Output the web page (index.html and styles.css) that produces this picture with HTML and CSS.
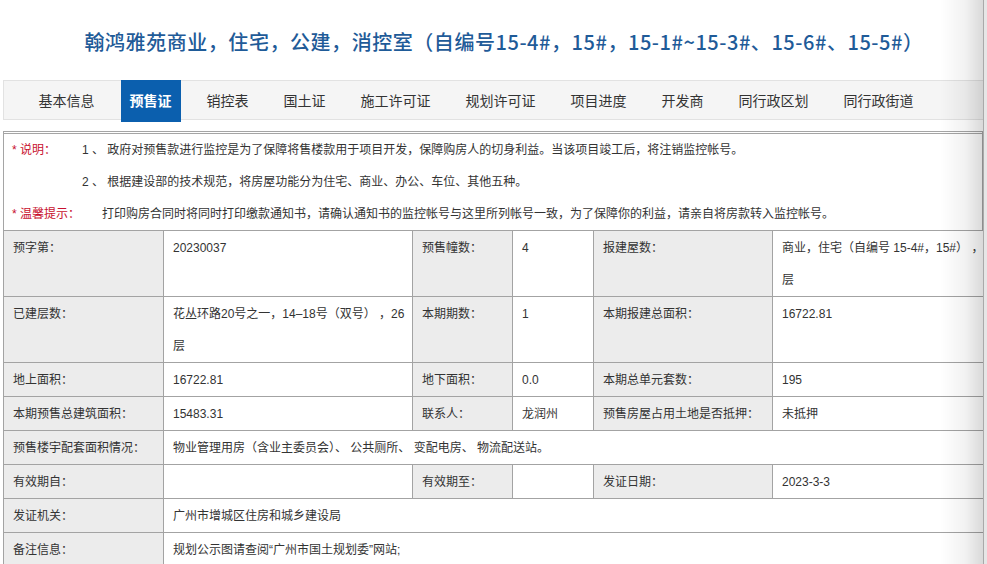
FILE: index.html
```html
<!DOCTYPE html>
<html lang="zh-CN">
<head>
<meta charset="utf-8">
<title>预售证</title>
<link rel="stylesheet" href="styles.css">
</head>
<body>
<div class="page">
  <h1 class="title">翰鸿雅苑商业，住宅，公建，消控室（自编号15-4#，15#，15-1#~15-3#、15-6#、15-5#）</h1>
  <ul class="tabs">
    <li><a class="tab">基本信息</a></li>
    <li><a class="tab active">预售证</a></li>
    <li><a class="tab">销控表</a></li>
    <li><a class="tab">国土证</a></li>
    <li><a class="tab">施工许可证</a></li>
    <li><a class="tab">规划许可证</a></li>
    <li><a class="tab">项目进度</a></li>
    <li><a class="tab">开发商</a></li>
    <li><a class="tab">同行政区划</a></li>
    <li><a class="tab">同行政街道</a></li>
  </ul>
  <div class="notice">
    <div class="line"><span class="label w1">* 说明：</span><span>1 、 政府对预售款进行监控是为了保障将售楼款用于项目开发，保障购房人的切身利益。当该项目竣工后，将注销监控帐号。</span></div>
    <div class="line indent"><span>2 、 根据建设部的技术规范，将房屋功能分为住宅、商业、办公、车位、其他五种。</span></div>
    <div class="line"><span class="label w2">* 温馨提示：</span><span>打印购房合同时将同时打印缴款通知书，请确认通知书的监控帐号与这里所列帐号一致，为了保障你的利益，请亲自将房款转入监控帐号。</span></div>
  </div>
  <table class="info">
    <colgroup>
      <col class="c1"><col class="c2"><col class="c3"><col class="c4"><col class="c5"><col class="c6">
    </colgroup>
    <tr>
      <th>预字第：</th><td>20230037</td>
      <th>预售幢数：</th><td>4</td>
      <th>报建屋数：</th><td class="tight">商业，住宅（自编号 15-4#，15#）&nbsp;，<br>层</td>
    </tr>
    <tr>
      <th>已建层数：</th><td class="tight">花丛环路20号之一，14–18号（双号）&nbsp;，26<br>层</td>
      <th>本期期数：</th><td>1</td>
      <th>本期报建总面积：</th><td>16722.81</td>
    </tr>
    <tr>
      <th>地上面积：</th><td>16722.81</td>
      <th>地下面积：</th><td>0.0</td>
      <th>本期总单元套数：</th><td>195</td>
    </tr>
    <tr>
      <th>本期预售总建筑面积：</th><td>15483.31</td>
      <th>联系人：</th><td>龙润州</td>
      <th>预售房屋占用土地是否抵押：</th><td>未抵押</td>
    </tr>
    <tr>
      <th>预售楼宇配套面积情况：</th><td colspan="5">物业管理用房（含业主委员会）、 公共厕所、 变配电房、 物流配送站。</td>
    </tr>
    <tr>
      <th>有效期自：</th><td></td>
      <th>有效期至：</th><td></td>
      <th>发证日期：</th><td>2023-3-3</td>
    </tr>
    <tr>
      <th>发证机关：</th><td colspan="5">广州市增城区住房和城乡建设局</td>
    </tr>
    <tr>
      <th>备注信息：</th><td colspan="5">规划公示图请查阅“广州市国土规划委”网站;</td>
    </tr>
  </table>
</div>
<div class="edge"></div>
</body>
</html>
```
FILE: styles.css
```css
html, body {
  margin: 0;
  padding: 0;
  background: #fff;
  overflow: hidden;
}
body {
  font-family: "Liberation Sans", "Noto Sans CJK SC", sans-serif;
  color: #333;
}
.page {
  width: 980px;
  margin-left: 3px;
}
.title {
  margin: 0;
  padding: 28px 0 24px 22px;
  text-align: center;
  font-family: "Noto Sans CJK SC", sans-serif;
  font-weight: 500;
  font-size: 20px;
  line-height: 28px;
  color: #1f5b98;
  letter-spacing: 0.55px;
  white-space: nowrap;
}
.tabs {
  list-style: none;
  margin: 0;
  padding: 0 0 0 17px;
  display: flex;
  background: #f5f5f5;
  border: 1px solid #e2e2e2;
  border-right: none;
  box-sizing: border-box;
  height: 40px;
}
.tabs li {
  margin: 0 8.5px;
  display: flex;
}
.tab {
  display: block;
  padding: 0 9px;
  font-family: "Noto Sans CJK SC", sans-serif;
  font-size: 14px;
  line-height: 38px;
  color: #333;
  white-space: nowrap;
}
.tab.active {
  background: #0b5fae;
  color: #fff;
  font-weight: 700;
  margin-top: -1px;
  height: 42px;
  line-height: 40px;
}
.notice {
  margin-top: 11px;
  border-top: 3px double #a5a5a5;
  border-left: 1px solid #a5a5a5;
  border-right: 1px solid #a5a5a5;
  font-size: 12px;
  line-height: 32px;
  color: #333;
}
.line {
  display: flex;
  white-space: nowrap;
}
.label {
  color: #c8102e;
  padding-left: 8px;
}
.label.w1 {
  width: 70px;
  flex: none;
}
.label.w2 {
  margin-right: 22px;
}
.indent {
  padding-left: 78px;
}
.info {
  border-collapse: collapse;
  width: 980px;
  table-layout: fixed;
  font-size: 12px;
}
.c1 { width: 160px; }
.c2 { width: 249px; }
.c3 { width: 100px; }
.c4 { width: 81px; }
.c5 { width: 179px; }
.c6 { width: 211px; }
.info th, .info td {
  border: 1px solid #a3a3a3;
  padding: 1px 9px 0 9px;
  line-height: 32px;
  vertical-align: top;
  text-align: left;
  font-weight: 400;
  color: #333;
}
.info th {
  background: #ececec;
}
.info td {
  background: #fff;
}
.info td.tight {
  padding-right: 0;
  white-space: nowrap;
}
.edge {
  position: fixed;
  top: 0;
  right: 0;
  bottom: 0;
  width: 47px;
  pointer-events: none;
  background: linear-gradient(90deg, rgba(0,0,0,0) 0px, rgba(0,0,0,0.05) 25px, rgba(0,0,0,0.15) 43px, #a9a9a9 43px, #a9a9a9 44px, #e6e6e6 44px, #e6e6e6 47px);
}
```
